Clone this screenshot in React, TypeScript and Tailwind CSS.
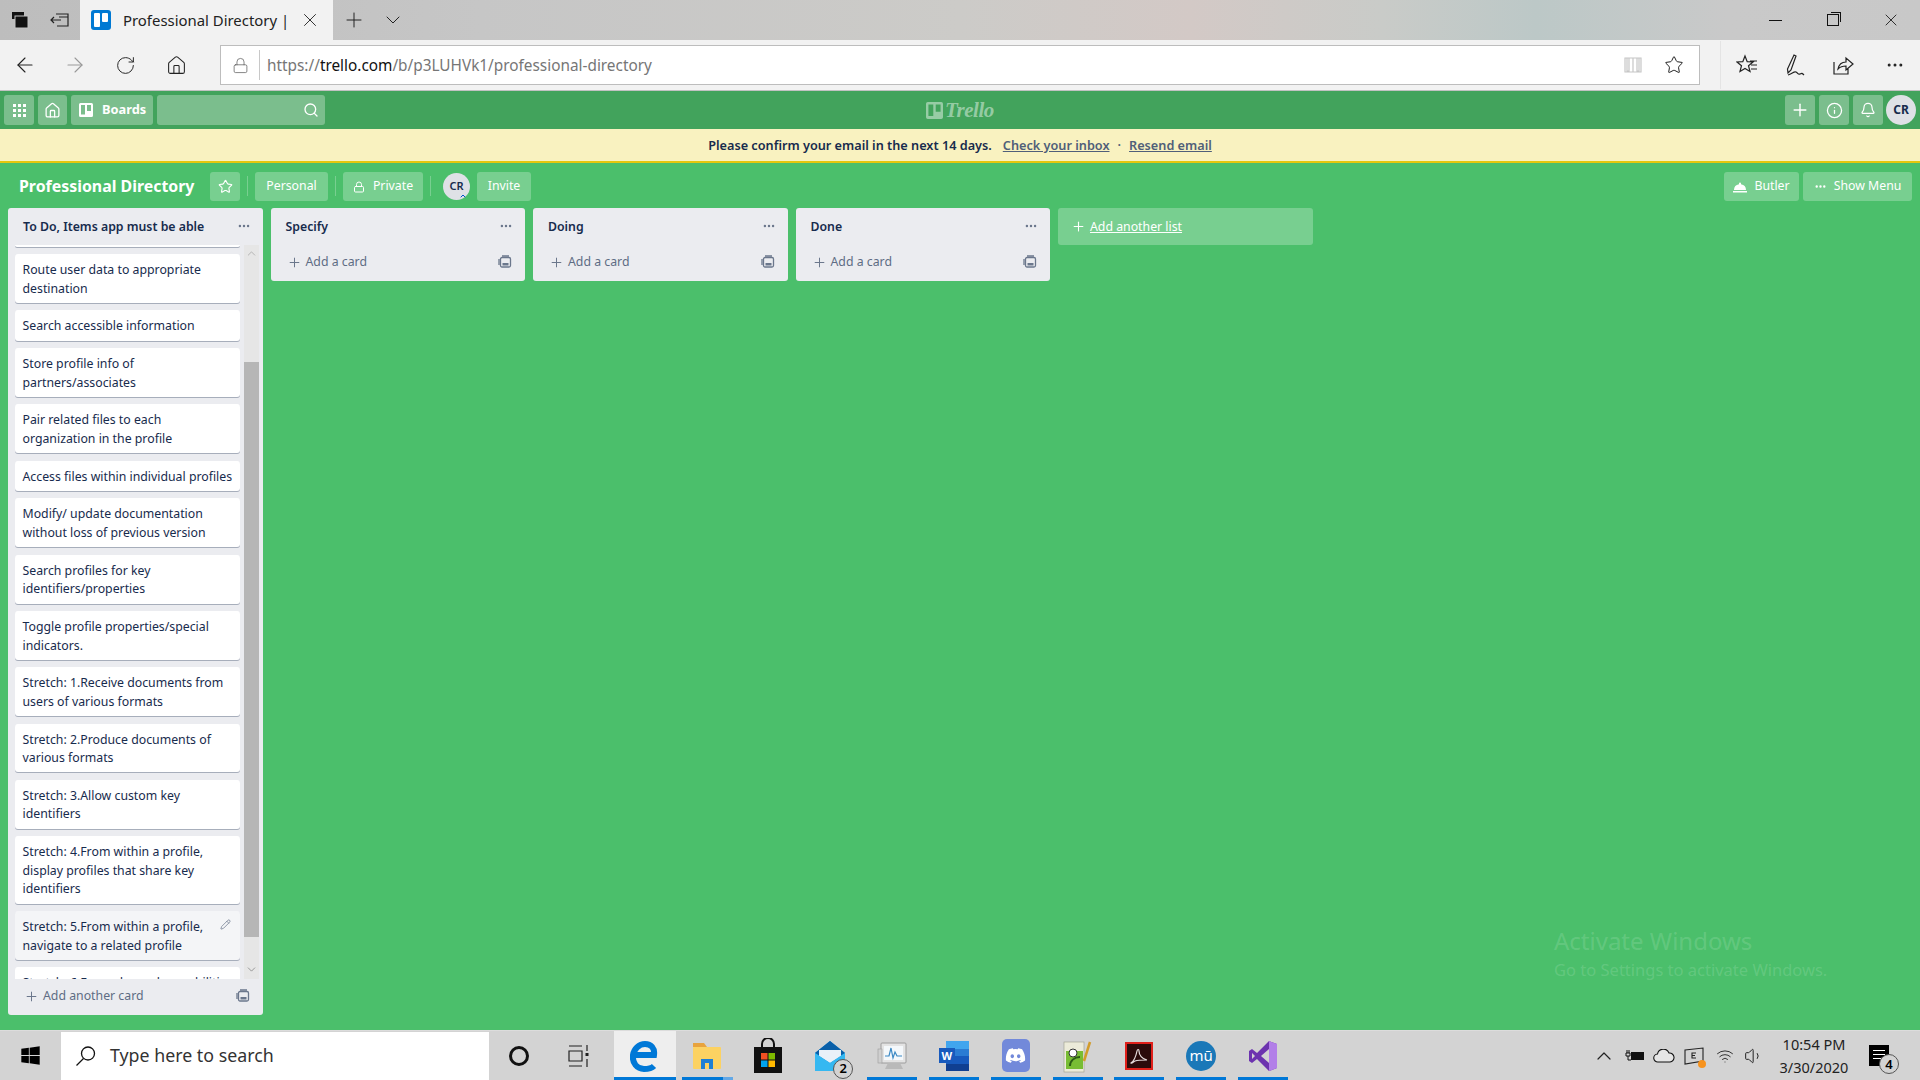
import type { ReactNode } from "react";
import {
  ArrowLeft,
  ArrowRight,
  Bell,
  ChevronDown,
  ChevronUp,
  Ellipsis,
  House,
  Info,
  Lock,
  Pencil,
  Plus,
  RotateCw,
  Search,
  Star,
  Volume1,
  Wifi,
  X,
} from "lucide-react";
import { FaDiscord, FaWindows } from "react-icons/fa";

const cards = [
  "Route user data to appropriate destination",
  "Search accessible information",
  "Store profile info of partners/associates",
  "Pair related files to each organization in the profile",
  "Access files within individual profiles",
  "Modify/ update documentation without loss of previous version",
  "Search profiles for key identifiers/properties",
  "Toggle profile properties/special indicators.",
  "Stretch: 1.Receive documents from users of various formats",
  "Stretch: 2.Produce documents of various formats",
  "Stretch: 3.Allow custom key identifiers",
  "Stretch: 4.From within a profile, display profiles that share key identifiers",
];

function TemplateIcon() {
  return (
    <svg width="14" height="14" viewBox="0 0 14 14" fill="none" stroke="#6b778c" strokeWidth="1.3" className="-mt-[1px]">
      <rect x="2.5" y="2.5" width="10" height="9.5" rx="1.5" />
      <rect x="4.5" y="8" width="6" height="2.5" fill="#6b778c" stroke="none" />
      <path d="M1 4v6M4 1h7" />
    </svg>
  );
}

function BoardIcon({ size = 14, className = "" }: { size?: number; className?: string }) {
  return (
    <svg width={size} height={size} viewBox="0 0 14 14" className={className}>
      <path
        fillRule="evenodd"
        fill="currentColor"
        d="M1.5 0h11A1.5 1.5 0 0 1 14 1.5v11a1.5 1.5 0 0 1-1.5 1.5h-11A1.5 1.5 0 0 1 0 12.5v-11A1.5 1.5 0 0 1 1.5 0zM2 2v9.5h4V2zm6 0v6h4V2z"
      />
    </svg>
  );
}

function HeaderBtn({ children, className = "" }: { children: ReactNode; className?: string }) {
  return (
    <div className={`flex h-[30px] items-center justify-center rounded-[3px] bg-white/30 text-white ${className}`}>
      {children}
    </div>
  );
}

function BoardBtn({ children, className = "" }: { children: ReactNode; className?: string }) {
  return (
    <div className={`flex h-[29px] items-center justify-center rounded-[3px] bg-white/25 pt-[1px] text-[12.3px] text-white ${className}`}>
      {children}
    </div>
  );
}

function Divider() {
  return <div className="mx-[7px] h-[20px] w-px bg-white/25" />;
}

function Card({ text, hover }: { text: string; hover?: boolean }) {
  return (
    <div
      className={`relative mb-[7.5px] rounded-[3px] pb-[4.8px] pl-[7.5px] pr-[4px] pt-[7px] text-[12.3px] leading-[18.5px] text-[#172b4d] shadow-[0_1px_0_rgba(9,30,66,0.3)] ${
        hover ? "bg-[#f4f5f7]" : "bg-white"
      }`}
    >
      {text}
      {hover && <Pencil size={11} strokeWidth={1.6} className="absolute right-[9px] top-[8px] text-[#6b778c]" />}
    </div>
  );
}

function ListHead({ title }: { title: string }) {
  return (
    <div className="flex h-[37px] items-center justify-between pl-[15px] pr-[12px]">
      <span className="mt-[2px] text-[12.3px] font-semibold text-[#172b4d]">{title}</span>
      <Ellipsis size={14} strokeWidth={2.2} className="-mt-[2px] text-[#6b778c]" />
    </div>
  );
}

function EmptyList({ title }: { title: string }) {
  return (
    <div className="w-[254.5px] shrink-0 rounded-[3px] bg-[#ebecf0]">
      <ListHead title={title} />
      <div className="flex h-[36px] items-center justify-between pb-[2px] pl-[16px] pr-[13px] text-[12.3px] text-[#5e6c84]">
        <span className="flex items-center gap-[4px]">
          <Plus size={15} strokeWidth={1.6} className="text-[#6b778c]" />
          Add a card
        </span>
        <TemplateIcon />
      </div>
    </div>
  );
}

function TaskSlot({
  children,
  bar,
  active,
  extra,
}: {
  children: ReactNode;
  bar?: boolean;
  active?: boolean;
  extra?: boolean;
}) {
  return (
    <div className={`relative flex h-full w-[61.8px] items-center justify-center ${active ? "bg-[#eeeeee]" : ""}`}>
      {children}
      {bar && <div className={`absolute bottom-0 left-[6px] h-[3px] bg-[#0078d7] ${extra ? "w-[41px]" : "w-[50px]"}`} />}
      {extra && <div className="absolute bottom-0 left-[47px] h-[3px] w-[10px] bg-[#63a8e6]" />}
      {active && <div className="absolute bottom-0 left-0 h-[3px] w-full bg-[#0078d7]" />}
    </div>
  );
}

function App() {
  return (
    <div className="relative flex h-[1080px] w-[1920px] flex-col overflow-hidden bg-[#4bbf6b] font-['Noto_Sans',sans-serif]">
      {/* Browser tab strip */}
      <div className="flex h-[40px] items-center bg-[linear-gradient(90deg,#bdbdbd_0%,#c6c6c6_25%,#cccbc8_50%,#d3c9c6_62%,#c9cbc8_72%,#bcc8c7_80%,#c9c9c9_90%,#c8c8c8_100%)]">
        <div className="flex w-[40px] justify-center">
          <svg width="18" height="18" viewBox="0 0 18 18" fill="#111">
            <rect x="1" y="1" width="12" height="7" />
            <rect x="4" y="5" width="13" height="12" stroke="#c4c4c4" />
          </svg>
        </div>
        <div className="flex w-[40px] justify-center">
          <svg width="20" height="18" viewBox="0 0 20 18" fill="none" stroke="#222" strokeWidth="1.2">
            <path d="M6 3h12v12H7M1 9h10M4 6 1 9l3 3M9 6h9" />
          </svg>
        </div>
        <div className="flex h-full w-[253px] items-center bg-[#f2f2f2] pl-[11px]">
          <div className="flex h-[20px] w-[20px] gap-[2px] rounded-[3px] bg-[#0079d3] p-[3px]">
            <div className="h-[14px] w-[6px] rounded-[1px] bg-white" />
            <div className="h-[9px] w-[6px] rounded-[1px] bg-white" />
          </div>
          <span className="ml-[12px] w-[176px] whitespace-nowrap text-[14.9px] text-[#222]">Professional Directory |</span>
          <X size={22} strokeWidth={1} className="text-[#222]" />
        </div>
        <Plus size={24} strokeWidth={1} className="ml-[9px] text-[#222]" />
        <ChevronDown size={24} strokeWidth={1} className="ml-[15px] text-[#222]" />
        <div className="ml-auto flex items-center text-[#111]">
          <div className="flex w-[57px] justify-center">
            <div className="h-px w-[13px] bg-[#111]" />
          </div>
          <div className="flex w-[58px] justify-center">
            <div className="relative h-[12px] w-[12px] border border-[#111]">
              <div className="absolute -right-[3px] -top-[3px] h-[10px] w-[10px] border-r border-t border-[#111]" />
            </div>
          </div>
          <div className="flex w-[58px] justify-center">
            <X size={20} strokeWidth={1} />
          </div>
        </div>
      </div>

      {/* Address bar */}
      <div className="flex h-[51px] items-start border-b border-[#c2c2c2] bg-[#f2f2f2]">
        <div className="flex h-[50px] w-[50px] shrink-0 items-center justify-center">
          <ArrowLeft size={24} strokeWidth={1.1} className="text-[#222]" />
        </div>
        <div className="flex h-[50px] w-[50px] shrink-0 items-center justify-center">
          <ArrowRight size={24} strokeWidth={1.1} className="text-[#999]" />
        </div>
        <div className="flex h-[50px] w-[50px] shrink-0 items-center justify-center">
          <RotateCw size={21} strokeWidth={1.1} className="text-[#222]" />
        </div>
        <div className="flex h-[50px] w-[51px] shrink-0 items-center justify-center pl-[1px]">
          <House size={21} strokeWidth={1.2} className="text-[#222]" />
        </div>
        <div className="ml-[19px] mt-[5px] flex h-[40px] w-[1480px] shrink-0 items-center border border-[#bdbdbd] bg-white">
          <div className="flex w-[38px] justify-center">
            <Lock size={17} strokeWidth={1} className="text-[#555]" />
          </div>
          <div className="h-[30px] w-px bg-[#c8c8c8]" />
          <span className="ml-[7px] mt-[2px] whitespace-nowrap text-[15.35px] text-[#767676]">
            https://<span className="text-[#111]">trello.com</span>/b/p3LUHVk1/professional-directory
          </span>
          <div className="ml-auto flex items-center">
            <svg width="20" height="20" viewBox="0 0 20 20" fill="none" stroke="#c6c6c6" strokeWidth="1.2">
              <path d="M2 3h16v14H2zM10 3v14M4 3h2v13H4zM14 3h2v13h-2z" />
            </svg>
            <Star size={20} strokeWidth={1.2} className="ml-[21px] mr-[15px] text-[#222]" />
          </div>
        </div>
        <div className="ml-[20px] mt-[1px] flex h-[48px] flex-1 items-center border-l border-[#e4e4e4] text-[#222]">
          <div className="flex w-[49px] justify-center pl-[3px]">
            <svg width="22" height="22" viewBox="0 0 22 22" fill="none" stroke="#222" strokeWidth="1.2">
              <path d="M9 2l2.2 5.6 5.8.4-4.5 3.7 1.5 5.8L9 14.4l-5 3.1 1.5-5.8L1 8l5.800-.4zM14 7h7M15 11h6M15 15h6" />
            </svg>
          </div>
          <div className="flex w-[50px] justify-center">
            <svg width="24" height="24" viewBox="0 0 24 24" fill="none" stroke="#222" strokeWidth="1.2">
              <path d="M11 2l2 1-5 14-3 3-.5-4zM5 22c4-1 6-4 8-3s2 3 4 2 2-1 4 1" />
            </svg>
          </div>
          <div className="flex w-[46px] justify-center">
            <svg width="22" height="22" viewBox="0 0 22 22" fill="none" stroke="#222" strokeWidth="1.2">
              <path d="M2 8v12h14v-6M6 15c1-5 4-7 8-7V4l7 6-7 6v-4c-4 0-6 1-8 3z" />
            </svg>
          </div>
          <div className="flex w-[54px] justify-center pl-[3px]">
            <Ellipsis size={20} strokeWidth={1.6} />
          </div>
        </div>
      </div>

      {/* Trello header */}
      <div className="relative flex h-[38px] items-center bg-[#42a35c] pl-[4px] pr-[4px]">
        <HeaderBtn className="w-[30px]">
          <div className="grid grid-cols-3 gap-[2px]">
            {[...Array(9)].map((_, i) => (
              <div key={i} className="h-[3px] w-[3px] bg-white" />
            ))}
          </div>
        </HeaderBtn>
        <HeaderBtn className="ml-[4px] w-[29px]">
          <House size={17} strokeWidth={1.8} />
        </HeaderBtn>
        <HeaderBtn className="ml-[4px] w-[82px] justify-start gap-[9px] pl-[8px]">
          <BoardIcon size={14} />
          <span className="text-[12.8px] font-bold">Boards</span>
        </HeaderBtn>
        <HeaderBtn className="ml-[4px] w-[168px] justify-end pr-[6px]">
          <Search size={16} strokeWidth={2} />
        </HeaderBtn>
        {/* logo sits in the middle of the bar */}
        <div className="absolute left-[926px] top-[8px] flex items-center gap-[2px] text-white/45">
          <BoardIcon size={17} />
          <span className="font-['Liberation_Serif',serif] text-[21px] font-bold italic leading-[22px] tracking-[-0.5px]">Trello</span>
        </div>
        <div className="ml-auto flex items-center">
          <HeaderBtn className="w-[30px]">
            <Plus size={20} strokeWidth={1.7} />
          </HeaderBtn>
          <HeaderBtn className="ml-[4px] w-[30px]">
            <Info size={17} strokeWidth={1.8} />
          </HeaderBtn>
          <HeaderBtn className="ml-[4px] w-[30px]">
            <Bell size={16} strokeWidth={1.8} />
          </HeaderBtn>
          <div className="ml-[3px] flex h-[30px] w-[30px] items-center justify-center rounded-full bg-[#dfe1e6] text-[12px] font-bold text-[#172b4d]">
            CR
          </div>
        </div>
      </div>

      {/* Email banner */}
      <div className="flex h-[34px] items-center justify-center gap-[11px] border-b-2 border-[#e6c60d] bg-[#f9f2c0] text-[12.7px] font-semibold text-[#172b4d]">
        <span className="mt-[1px]">Please confirm your email in the next 14 days.</span>
        <span className="mt-[1px] flex items-center gap-[8px] text-[#505f79]">
          <span className="underline">Check your inbox</span>
          <span>·</span>
          <span className="underline">Resend email</span>
        </span>
      </div>

      {/* Board header */}
      <div className="flex h-[45px] items-center pl-[19px] pr-[8px] pt-[1px]">
        <span className="mt-[1px] w-[191px] whitespace-nowrap text-[15.9px] font-bold text-white">Professional Directory</span>
        <BoardBtn className="w-[30px]">
          <Star size={15} strokeWidth={1.8} />
        </BoardBtn>
        <Divider />
        <BoardBtn className="w-[73px]">Personal</BoardBtn>
        <Divider />
        <BoardBtn className="w-[80px] gap-[8px]">
          <Lock size={12} strokeWidth={2} />
          Private
        </BoardBtn>
        <Divider />
        <div className="relative ml-[5px] flex h-[27px] w-[27px] items-center justify-center rounded-full bg-[#dfe1e6] text-[11px] font-semibold text-[#172b4d]">
          CR
          <ChevronUp size={8} strokeWidth={3} className="absolute bottom-0 right-[3px] text-[#0052cc]" />
        </div>
        <BoardBtn className="ml-[7px] w-[54px]">Invite</BoardBtn>
        <div className="ml-auto flex items-center gap-[4px]">
          <BoardBtn className="w-[75px] gap-[7px]">
            <svg width="14" height="12" viewBox="0 0 14 12" fill="white">
              <path d="M1 9a6 6 0 0 1 5-5.800V2.500a1 1 0 1 1 2 0v.7A6 6 0 0 1 13 9zM0 10h14v1.500H0z" />
            </svg>
            Butler
          </BoardBtn>
          <BoardBtn className="w-[109px] gap-[7px]">
            <Ellipsis size={13} strokeWidth={2.4} />
            Show Menu
          </BoardBtn>
        </div>
      </div>

      {/* Lists */}
      <div className="flex min-h-0 flex-1 items-start gap-[8px] pl-[8px]">
        <div className="flex h-[807px] w-[254.5px] shrink-0 flex-col rounded-[3px] bg-[#ebecf0]">
          <ListHead title="To Do, Items app must be able" />
          <div className="flex h-[734px] shrink-0">
            <div className="w-[232px] overflow-hidden pl-[7px]">
              {/* bottom edge of the card scrolled off the top */}
              <div className="mb-[7px] h-[2px] rounded-b-[3px] bg-white shadow-[0_1px_0_rgba(9,30,66,0.3)]" />
              {cards.map((c) => (
                <Card key={c} text={c} />
              ))}
              <Card text="Stretch: 5.From within a profile, navigate to a related profile" hover />
              <Card text="Stretch: 6.Expand search capabilities" />
            </div>
            <div className="ml-[4px] flex h-full w-[15px] flex-col bg-[#e6e6e6]">
              <div className="flex h-[117px] justify-center pt-[2px]">
                <ChevronUp size={13} strokeWidth={1.2} className="text-[#9a9a9a]" />
              </div>
              <div className="h-[575px] bg-[#b6b6b6]" />
              <div className="flex flex-1 items-end justify-center pb-[3px]">
                <ChevronDown size={13} strokeWidth={1.2} className="text-[#6e6e6e]" />
              </div>
            </div>
          </div>
          <div className="flex flex-1 items-center justify-between pb-[2px] pl-[16px] pr-[13px] text-[12.3px] text-[#5e6c84]">
            <span className="flex items-center gap-[4px]">
              <Plus size={15} strokeWidth={1.6} className="text-[#6b778c]" />
              Add another card
            </span>
            <TemplateIcon />
          </div>
        </div>
        <EmptyList title="Specify" />
        <EmptyList title="Doing" />
        <EmptyList title="Done" />
        <div className="flex h-[37px] w-[254.5px] shrink-0 items-center gap-[4px] rounded-[3px] bg-white/25 pl-[13px] text-[12.3px] text-white">
          <Plus size={15} strokeWidth={1.7} />
          <span className="mt-[2px] underline">Add another list</span>
        </div>
      </div>

      {/* Taskbar */}
      <div className="flex h-[50px] shrink-0 items-center border-t border-[#dcdcdc] bg-[#d3d3d3]">
        <div className="flex w-[61px] justify-center">
          <FaWindows size={21} className="text-black" />
        </div>
        <div className="flex h-[48px] w-[428px] items-center bg-white pl-[14px]">
          <svg width="22" height="22" viewBox="0 0 22 22" fill="none" stroke="#111" strokeWidth="1.3">
            <circle cx="13" cy="8.500" r="6.500" />
            <path d="M8.500 13.500 1.500 20.500" />
          </svg>
          <span className="ml-[13px] text-[17.8px] text-[#333]">Type here to search</span>
        </div>
        <div className="flex w-[60px] justify-center">
          <div className="h-[20px] w-[20px] rounded-full border-[3px] border-[#111]" />
        </div>
        <div className="flex w-[60px] justify-center">
          <svg width="22" height="24" viewBox="0 0 22 24" fill="none" stroke="#222" strokeWidth="1.2">
            <path d="M1 2h13M1 22h13M1 7h13v10H1zM19 1v6M19 15v8" />
            <rect x="17.500" y="9" width="3" height="3" fill="#222" stroke="none" />
          </svg>
        </div>
        <div className="ml-[5px] flex h-full items-center">
          <TaskSlot active>
            <svg width="30" height="32" viewBox="0 0 30 32" fill="none" stroke="#0078d7" strokeWidth="6">
              <path d="M5 15h19c1-7-3-11-9-11S4 9 3 15c-1 8 4 14 11 14 4 0 8-1 10-3" />
            </svg>
          </TaskSlot>
          <TaskSlot bar extra>
            <svg width="30" height="28" viewBox="0 0 30 28">
              <path d="M1 1h11l3 4H1z" fill="#e8a33d" />
              <rect x="1" y="5" width="28" height="22" rx="1" fill="#fcd262" />
              <rect x="9" y="17" width="12" height="10" fill="#1e7fd4" />
              <rect x="13" y="21" width="4" height="6" fill="#fcd262" />
            </svg>
          </TaskSlot>
          <TaskSlot>
            <svg width="30" height="36" viewBox="0 0 30 36">
              <path d="M9 10V6a6 6 0 0 1 12 0v4" fill="none" stroke="#111" strokeWidth="2" />
              <rect x="1" y="9" width="28" height="26" fill="#111" />
              <rect x="8" y="15" width="6.500" height="6.500" fill="#f25022" />
              <rect x="15.500" y="15" width="6.500" height="6.500" fill="#7fba00" />
              <rect x="8" y="22.500" width="6.500" height="6.500" fill="#00a4ef" />
              <rect x="15.500" y="22.500" width="6.500" height="6.500" fill="#ffb900" />
            </svg>
          </TaskSlot>
          <TaskSlot>
            <div className="relative">
              <svg width="32" height="32" viewBox="0 0 32 32">
                <path d="M1 13 16 1l15 12v18H1z" fill="#1490df" />
                <path d="M1 13 16 1l15 12-15 9z" fill="#0a5fa8" />
                <path d="M5 10h22v6l-11 7-11-7z" fill="#e9f1f8" />
                <path d="M1 13l15 10 15-10v18H1z" fill="#35b8f1" />
              </svg>
              <div className="absolute -bottom-[7px] -right-[7px] flex h-[20px] w-[20px] items-center justify-center rounded-full border border-[#555] bg-[#d3d3d3] text-[13px] font-semibold leading-none text-black">
                2
              </div>
            </div>
          </TaskSlot>
          <TaskSlot bar>
            <svg width="30" height="30" viewBox="0 0 30 30">
              <rect x="4" y="2" width="25" height="20" rx="1" fill="#e3e3e3" stroke="#9c9c9c" />
              <rect x="7" y="5" width="19" height="14" fill="#f4f8fb" />
              <path d="M8 15l4 0 2-8 2 10 2-6 2 4 5 0" fill="none" stroke="#3a88c4" strokeWidth="1.2" />
              <path d="M11 22h12l3 6H8z" fill="#b9b9b9" />
              <rect x="1" y="8" width="4" height="14" fill="#cfcfcf" stroke="#9c9c9c" strokeWidth=".6" />
            </svg>
          </TaskSlot>
          <TaskSlot bar>
            <div className="relative h-[32px] w-[30px]">
              <svg width="30" height="32" viewBox="0 0 30 32" className="absolute inset-0">
                <rect x="7" y="1" width="23" height="30" rx="1" fill="#2b7cd3" />
                <rect x="7" y="1" width="23" height="8" fill="#41a5ee" />
                <rect x="7" y="16" width="23" height="8" fill="#185abd" />
                <rect x="7" y="24" width="23" height="7" fill="#103f91" />
              </svg>
              <div className="absolute left-0 top-[8px] flex h-[15px] w-[16px] items-center justify-center bg-[#185abd] text-[11px] font-bold leading-none text-white">
                W
              </div>
            </div>
          </TaskSlot>
          <TaskSlot bar>
            <div className="flex h-[33px] w-[28px] items-center justify-center rounded-[5px] bg-[#7289da]">
              <FaDiscord size={21} className="text-white" />
            </div>
          </TaskSlot>
          <TaskSlot bar>
            <svg width="30" height="34" viewBox="0 0 30 34">
              <rect x="2" y="3" width="20" height="30" fill="#ecebd9" stroke="#9b9b8a" strokeWidth=".6" />
              <rect x="4" y="12" width="17" height="18" fill="#78bd33" />
              <circle cx="11" cy="14" r="4" fill="#fff" stroke="#333" />
              <path d="M8 27c0-5 4-9 10-9" stroke="#2c5c14" strokeWidth="2" fill="none" />
              <path d="M22 22 28 3" stroke="#d29c2a" strokeWidth="2.500" />
            </svg>
          </TaskSlot>
          <TaskSlot bar>
            <svg width="28" height="28" viewBox="0 0 28 28">
              <rect x="1" y="1" width="26" height="26" fill="#2b0b0b" stroke="#e0201b" strokeWidth="2" />
              <path d="M6 21c3-2 5-7 6-12 .4-2 2-2 2 0 0 4 3 8 8 9-4 0-9 0-12 1-2 1-3 3-4 2z" fill="none" stroke="#e6dcdc" strokeWidth="1.200" />
            </svg>
          </TaskSlot>
          <TaskSlot bar>
            <div className="flex h-[30px] w-[30px] items-center justify-center rounded-full bg-[#1a78b8] text-[15px] leading-none text-white">
              mū
            </div>
          </TaskSlot>
          <TaskSlot bar>
            <svg width="30" height="32" viewBox="0 0 30 32">
              <path d="M21 1 29 4v24l-8 3L9 19l-5 4-3-2V11l3-2 5 4z" fill="#6c33af" />
              <path d="M21 1 29 4v24l-8 3z" fill="#b27fe8" />
              <path d="M21 9v14l-8-7z" fill="#d3d3d3" />
              <path d="M4 13v6l3-3z" fill="#d3d3d3" />
            </svg>
          </TaskSlot>
        </div>
        <div className="ml-auto flex h-full items-center">
          <div className="flex w-[30px] justify-center">
            <ChevronUp size={24} strokeWidth={1.2} className="text-[#222]" />
          </div>
          <div className="flex w-[30px] justify-center">
            <svg width="21" height="12" viewBox="0 0 21 12">
              <path d="M3 0v3M5 0v3M2 3h4v3H2zM4 6v4h3" stroke="#111" fill="none" />
              <rect x="7" y="2" width="13" height="8" fill="#111" />
            </svg>
          </div>
          <div className="flex w-[30px] justify-center">
            <svg width="22" height="14" viewBox="0 0 22 14" fill="#e6e6e6" stroke="#111" strokeWidth="1.100">
              <path d="M5 13a4 4 0 0 1-.5-8A6 6 0 0 1 16 4a4.500 4.500 0 0 1 1 9z" />
            </svg>
          </div>
          <div className="relative flex w-[30px] justify-center">
            <svg width="20" height="18" viewBox="0 0 20 18" fill="none" stroke="#222" strokeWidth="1.100">
              <path d="M1 3 19 1v13L1 17zM12 6H8v5h4M8 8.500h3" />
            </svg>
            <div className="absolute bottom-[-3px] right-[3px] h-[8px] w-[8px] rounded-full bg-[#f7931e]" />
          </div>
          <div className="flex w-[31px] justify-center">
            <Wifi size={18} strokeWidth={1.2} className="text-[#222]" />
          </div>
          <div className="flex w-[28px] justify-center">
            <Volume1 size={20} strokeWidth={1.2} className="text-[#222]" />
          </div>
          <div className="flex w-[90px] flex-col items-center pl-[2px] text-[14.5px] leading-[23px] text-[#222]">
            <span>10:54 PM</span>
            <span>3/30/2020</span>
          </div>
          <div className="relative ml-[11px] mr-[31px] h-[21px] w-[20px] bg-black">
            <div className="mx-[4px] mt-[5px] h-px bg-white" />
            <div className="mx-[4px] mt-[3px] h-px bg-white" />
            <div className="mx-[4px] mt-[3px] h-px bg-white" />
            <div className="absolute -bottom-[8px] -right-[10px] flex h-[20px] w-[20px] items-center justify-center rounded-full border border-[#555] bg-[#d3d3d3] text-[13px] font-semibold leading-none text-black">
              4
            </div>
          </div>
        </div>
      </div>

      {/* Windows watermark floats over the page */}
      <div className="pointer-events-none absolute left-[1554px] top-[925px] text-white/15">
        <div className="text-[24px] leading-[32px]">Activate Windows</div>
        <div className="mt-[2px] text-[16.5px] leading-[22px]">Go to Settings to activate Windows.</div>
      </div>
    </div>
  );
}

export default App;
